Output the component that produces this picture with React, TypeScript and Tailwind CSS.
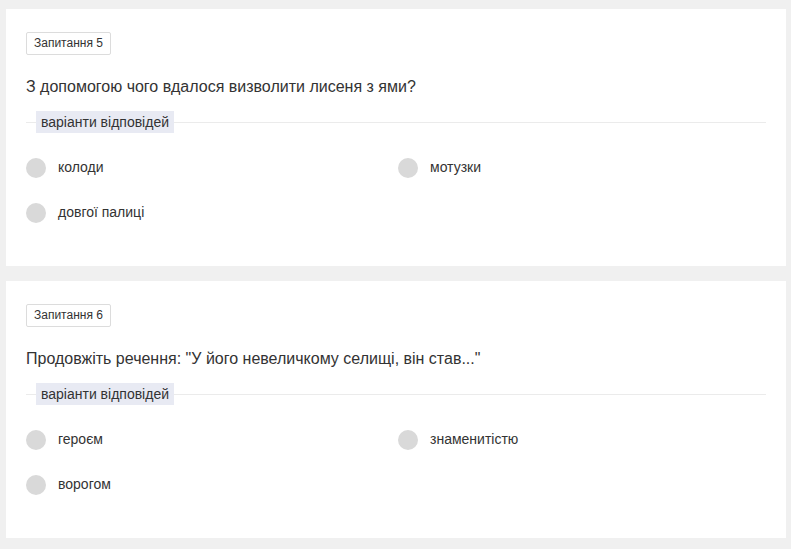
import React from "react";

const questions = [
  {
    n: 5,
    text: "З допомогою чого вдалося визволити лисеня з ями?",
    options: ["колоди", "мотузки", "довгої палиці"],
  },
  {
    n: 6,
    text: 'Продовжіть речення: "У його невеличкому селищі, він став..."',
    options: ["героєм", "знаменитістю", "ворогом"],
  },
];

export default function App() {
  return (
    <div
      className="min-h-[549px] w-[791px] bg-[#f0f0f0] pt-[9px] pl-[6px]"
      style={{ fontFamily: '"Liberation Sans", Arial, sans-serif' }}
    >
      <div className="flex w-[780px] flex-col gap-[15px]">
        {questions.map((q) => (
          <div key={q.n} className="h-[257px] bg-white pl-[20px] pr-[20px] pt-[21px]">
            <div className="inline-flex h-[23px] items-center rounded-[2px] border border-[#dcdcdc] px-[7px] text-[12px] text-[#333]">
              Запитання {q.n}
            </div>
            <div className="mt-[20px] text-[16px] leading-[24px] text-[#333]">{q.text}</div>

            {/* legend */}
            <div className="relative mt-[11px] h-[22px]">
              <div className="absolute left-0 right-0 top-[12px] h-px bg-[#ebebeb]" />
              <span className="relative ml-[10px] inline-flex h-[22px] items-center bg-[#e8eaf3] px-[5px] text-[14px] text-[#333]">
                варіанти відповідей
              </span>
            </div>

            <div className="mt-[26px] grid grid-cols-[372px_1fr] gap-y-[25px]">
              {q.options.map((o) => (
                <div key={o} className="flex h-[20px] items-center gap-[12px]">
                  <span className="h-[20px] w-[20px] shrink-0 rounded-full bg-[#d9d9d9]" />
                  <span className="text-[14px] text-[#333]">{o}</span>
                </div>
              ))}
            </div>
          </div>
        ))}
      </div>
    </div>
  );
}
